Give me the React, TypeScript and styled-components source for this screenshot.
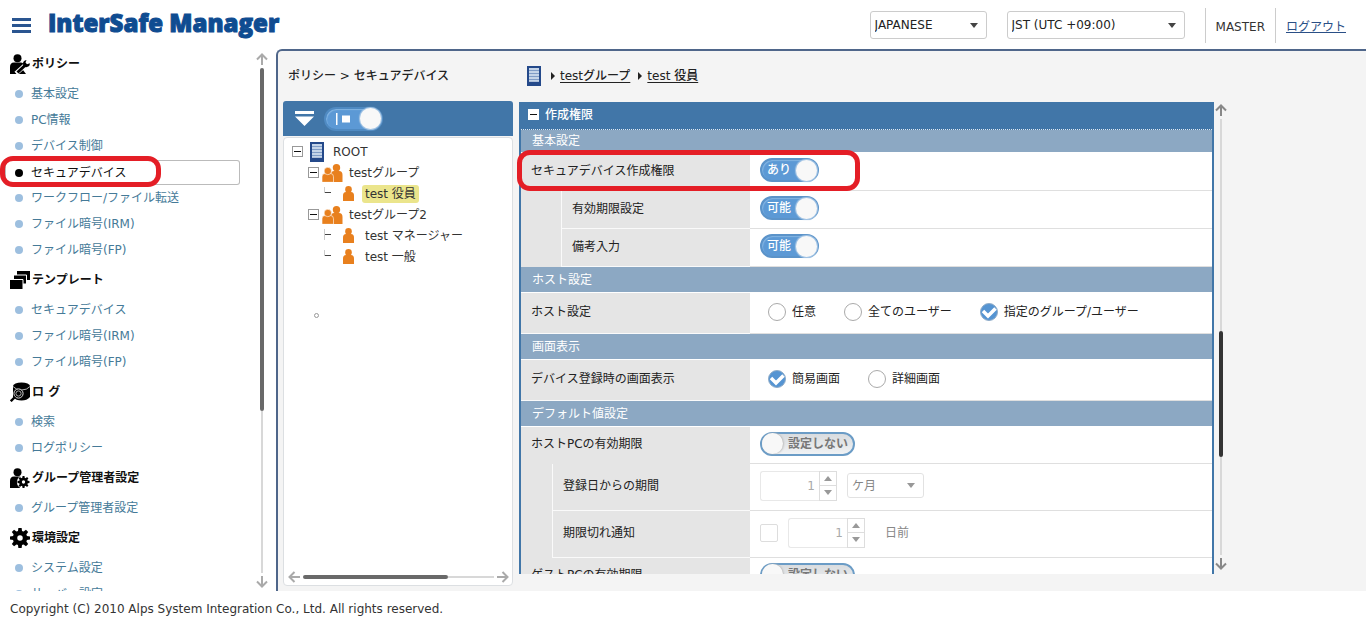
import React, { ReactNode, useId, useState } from 'react';
import styled, { createGlobalStyle, css } from 'styled-components';

const GlobalStyle = createGlobalStyle`
  *, *::before, *::after { box-sizing: border-box; }
  body {
    margin: 0;
    background: #fff;
    color: #333;
    font: 12px/18px "DejaVu Sans", "Noto Sans CJK JP", sans-serif;
  }
  button, input, select { font: inherit; color: inherit; }
  ul { list-style: none; margin: 0; padding: 0; }
`;

const Page = styled.div`
  display: flex;
  flex-direction: column;
  height: 100vh;
`;

/* ---------- header ---------- */

const Header = styled.header`
  display: flex;
  align-items: center;
  flex: none;
  height: 49px;
  padding: 1px 20px 0 12px;
`;

const MenuButton = styled.button`
  display: flex;
  flex-direction: column;
  gap: 3px;
  width: 19px;
  padding: 0;
  border: 0;
  background: none;
  span { height: 3px; background: #2a5590; }
`;

const Logo = styled.h1`
  margin: 0 auto 0 17px;
  padding-bottom: 4px;
  font: 800 24px/32px "Open Sans", sans-serif;
  color: #0f4c91;
  -webkit-text-stroke: 1px #0f4c91;
  white-space: nowrap;
`;

const SelectBox = styled.span<{ $width: number; $disabled?: boolean }>`
  display: inline-grid;
  align-items: center;
  width: ${p => p.$width}px;
  height: ${p => (p.$disabled ? 25 : 28)}px;
  border: 1px solid #ccc;
  border-radius: 3px;
  background: #fff;
  opacity: ${p => (p.$disabled ? 0.55 : 1)};
  select {
    grid-area: 1 / 1;
    appearance: none;
    width: 100%;
    height: 100%;
    padding: 0 20px 0 4px;
    border: 0;
    background: none;
    color: #222;
    opacity: 1;
  }
  svg {
    grid-area: 1 / 1;
    justify-self: end;
    margin-right: 8px;
    pointer-events: none;
  }
`;

const HeaderSelects = styled.div`
  display: flex;
  gap: 20px;
  margin-right: 20px;
`;

const UserCell = styled.div`
  display: flex;
  align-items: center;
  height: 35px;
  padding: 3px 10px 0;
  border-left: 1px solid #ccc;
  &:last-child { padding-right: 0; }
  a { color: #2a4f86; }
`;

/* ---------- body ---------- */

const Body = styled.div`
  display: flex;
  flex: 1;
  min-height: 0;
`;

const Sidebar = styled.nav`
  display: flex;
  flex: none;
  width: 276px;
`;

const Menu = styled.div`
  flex: 1;
  overflow: hidden;
  padding: 1px 0 0 5px;
`;

const MenuHeading = styled.h2`
  display: flex;
  align-items: center;
  gap: 2px;
  height: 34px;
  margin: 0;
  padding: 0 0 0 5px;
  font-size: 12px;
  font-weight: 700;
  color: #111;
  svg { flex: none; }
  &:first-child { height: 31px; padding-bottom: 3px; }
`;

const MenuItem = styled.li<{ $active?: boolean }>`
  display: flex;
  align-items: center;
  height: ${p => (p.$active ? 25 : 26)}px;
  width: 235px;
  padding-left: 10px;
  border-radius: 3px;
  ${p => p.$active && css`box-shadow: inset 0 0 0 1px #bbb;`}
  &::before {
    content: '';
    width: 8px;
    height: 8px;
    margin-right: 8px;
    border-radius: 50%;
    background: ${p => (p.$active ? '#000' : '#9dbfdf')};
  }
  a {
    color: ${p => (p.$active ? '#111' : '#457a98')};
    text-decoration: none;
    white-space: nowrap;
  }
`;

const ScrollBar = styled.div<{ $horizontal?: boolean; $color: string }>`
  display: flex;
  flex: none;
  align-items: center;
  flex-direction: ${p => (p.$horizontal ? 'row' : 'column')};
  gap: 3px;
  color: ${p => p.$color};
`;

const Track = styled.div<{ $horizontal?: boolean }>`
  display: flex;
  flex: 1;
  align-items: center;
  flex-direction: ${p => (p.$horizontal ? 'row' : 'column')};
`;

const Rail = styled.i<{ $grow: number; $horizontal?: boolean }>`
  flex: ${p => p.$grow} 1 0;
  ${p => (p.$horizontal ? 'height' : 'width')}: 2px;
  background: #d8d8d8;
`;

const Thumb = styled(Rail)<{ $tone: string }>`
  ${p => (p.$horizontal ? 'height' : 'width')}: 4px;
  border-radius: 2px;
  background: ${p => p.$tone};
`;

const Content = styled.main`
  display: flex;
  flex: 1;
  min-width: 0;
  padding: 0 139px 5px 5px;
  gap: 6px;
  border: solid #4f668a;
  border-width: 2px 0 0 2px;
  border-top-left-radius: 6px;
  background: #f4f4f4;
`;

const Column = styled.div<{ $width?: number }>`
  display: flex;
  flex-direction: column;
  min-width: 0;
  flex: ${p => (p.$width ? `0 0 ${p.$width}px` : '1')};
`;

const Crumbs = styled.div<{ $indent: number }>`
  display: flex;
  flex: none;
  align-items: center;
  height: 50px;
  padding-left: ${p => p.$indent}px;
  font-weight: 500;
  color: #222;
  white-space: nowrap;
  a { color: inherit; text-underline-offset: 2px; }
  > svg { margin-right: 2px; }
`;

const CrumbArrow = styled.i`
  margin: 0 5px 0 8px;
  border: solid transparent;
  border-width: 4px 0 4px 4px;
  border-left-color: #222;
`;

/* ---------- tree ---------- */

const TreeHeader = styled.div`
  display: flex;
  align-items: center;
  gap: 10px;
  flex: none;
  height: 35px;
  padding-left: 12px;
  border-radius: 3px 3px 0 0;
  background: #4176a8;
`;

const IconButton = styled.button`
  display: flex;
  padding: 0;
  border: 0;
  background: none;
`;

const TreeBody = styled.div`
  display: flex;
  flex-direction: column;
  flex: 1;
  min-height: 0;
  margin-top: 1px;
  padding: 3px 3px 2px 4px;
  border: 1px solid #dcdfe2;
  border-radius: 4px;
  background: #fff;
`;

const TreeList = styled.ul`
  flex: 1;
  overflow: hidden;
  color: #333;
`;

const TreeRow = styled.li<{ $level: number }>`
  display: flex;
  align-items: center;
  height: 21px;
  padding-left: ${p => 4 + p.$level * 16}px;
  white-space: nowrap;
`;

const Fold = styled.button`
  display: flex;
  align-items: center;
  justify-content: center;
  width: 11px;
  height: 11px;
  padding: 0;
  border: 1px solid #999;
  background: #fff;
  &::before { content: ''; width: 7px; height: 1px; background: #111; }
`;

const Branch = styled.i<{ $fork?: boolean }>`
  display: flex;
  align-items: ${p => (p.$fork ? 'center' : 'flex-end')};
  width: 7px;
  height: ${p => (p.$fork ? 11 : 6)}px;
  margin-bottom: ${p => (p.$fork ? 2 : 7)}px;
  border-left: 1px solid #ccc;
  &::before { content: ''; width: 6px; height: 1px; background: #444; }
`;

const TreeIcon = styled.span<{ $gap: number }>`
  display: flex;
  justify-content: center;
  width: 21px;
  margin-left: ${p => p.$gap}px;
`;

const NodeName = styled.span<{ $selected?: boolean }>`
  margin-left: 3px;
  padding: 0 3px;
  border-radius: 3px;
  background: ${p => (p.$selected ? '#ebe58c' : 'none')};
`;

const Dot = styled.i`
  display: block;
  width: 5px;
  height: 5px;
  margin: 46px 0 0 26px;
  border: 1px solid #999;
  border-radius: 50%;
`;

/* ---------- settings panel ---------- */

const PanelArea = styled.div`
  position: relative;
  display: flex;
  flex: 1;
  gap: 1px;
  min-height: 0;
  margin: 1px 0 12px;
`;

const Panel = styled.section`
  flex: 1;
  min-width: 0;
  overflow: hidden;
  border: solid #4176a8;
  border-width: 0 2px;
  background: #fff;
`;

const PanelTitle = styled.h2`
  display: flex;
  align-items: center;
  gap: 6px;
  height: 28px;
  margin: 0;
  padding: 0 0 2px 7px;
  border-bottom: 1px dotted #dfe8f0;
  background: #4176a8;
  color: #fff;
  font-size: 12px;
  font-weight: 500;
  ${Fold} { border-color: #fff; }
`;

const SectionTitle = styled.h3<{ $first?: boolean }>`
  display: flex;
  align-items: center;
  height: ${p => (p.$first ? 22 : 25)}px;
  margin: 0 0 1px;
  padding-left: 11px;
  background: #8ca8c3;
  color: #fff;
  font-size: 12px;
  font-weight: 400;
`;

const Row = styled.div<{ $height: number }>`
  display: grid;
  grid-template-columns: 229px 1fr;
  height: ${p => p.$height}px;
`;

const LabelCell = styled.div<{ $indent?: number; $open?: boolean }>`
  display: flex;
  padding-left: ${p => p.$indent ?? 0}px;
  background: #e5e5e5;
  color: #222;
  > * {
    display: flex;
    flex: 1;
    align-items: center;
    padding: 0 0 ${p => (p.$open ? 3 : 2)}px 10px;
    border-bottom: ${p => (p.$open ? 0 : 1)}px solid #fafafa;
    ${p => p.$indent && css`border-left: 1px solid #fafafa;`}
  }
`;

const ValueCell = styled.div`
  display: flex;
  align-items: center;
  padding: 0 0 3px 10px;
  border-bottom: 1px solid #dfdfdf;
  color: #222;
  white-space: nowrap;
`;

const Switch = styled.button<{ $on: boolean }>`
  display: flex;
  align-items: center;
  justify-content: space-between;
  flex-direction: ${p => (p.$on ? 'row' : 'row-reverse')};
  height: 24px;
  padding: ${p => (p.$on ? '0 0 0 5px' : '0 5px 0 0')};
  border: 2px solid ${p => (p.$on ? '#5b93c9' : '#6b9cc6')};
  border-radius: 12px;
  background: ${p => (p.$on ? '#5c99d5' : 'linear-gradient(#d9dcdf, #f0f2f4)')};
  box-shadow: ${p => (p.$on ? 'inset 1px 1px 1px #82b4e2' : 'none')};
  color: ${p => (p.$on ? '#fff' : '#777')};
  font-weight: ${p => (p.$on ? 500 : 700)};
  gap: 5px;
  line-height: 20px;
  white-space: nowrap;
  &::after {
    content: '';
    width: 21px;
    height: 21px;
    border-radius: 50%;
    background: #f8f8f8;
    box-shadow: ${p => (p.$on ? '0 0 1px 1px #a9c8e6' : '1px 0 2px #bbb')};
  }
`;

const TreeSwitch = styled(Switch)`
  width: 59px;
  padding-left: 10px;
  border-color: #4f8ac2;
`;

const ChoiceLabel = styled.label<{ $gap: number }>`
  display: inline-grid;
  grid-template-columns: 18px auto;
  align-items: center;
  column-gap: 6px;
  margin-right: ${p => p.$gap}px;
  input, svg { grid-area: 1 / 1; margin: 0; }
  svg { pointer-events: none; visibility: hidden; }
  input {
    appearance: none;
    width: 18px;
    height: 18px;
    border: 1px solid #aaa;
    border-radius: 50%;
    background: #fff;
  }
  input:checked { border-color: #8facc8; background: #5594d2; }
  input:checked + svg { visibility: visible; }
`;

const ChoiceGroup = styled.div`
  display: flex;
  padding-left: 8px;
`;

const Tick = styled.input`
  appearance: none;
  width: 18px;
  height: 18px;
  margin: 0 10px 0 0;
  border: 1px solid #ddd;
  border-radius: 2px;
  background: #fff;
`;

const Stepper = styled.span`
  display: grid;
  grid-template-columns: 59px 18px;
  grid-template-rows: 15px 15px;
  margin-right: 10px;
  color: #aaa;
  input {
    grid-row: 1 / 3;
    width: 100%;
    padding: 0 4px 0 0;
    border: 1px solid #e8e8e8;
    border-right: 0;
    border-radius: 3px 0 0 3px;
    background: #fff;
    text-align: right;
  }
  button {
    display: grid;
    place-items: center;
    padding: 0;
    border: 1px solid #ddd;
    background: #fff;
  }
  button + button { border-top: 0; }
`;

const Muted = styled.span`
  margin-left: 10px;
  color: #888;
`;

/* ---------- annotation marks and footer ---------- */

const Marked = styled.div`
  position: relative;
  padding-top: 1px;
`;

const Highlight = styled.i`
  position: absolute;
  z-index: 2;
  border: 5px solid #e41e26;
  border-radius: 13px;
  pointer-events: none;
`;

const MenuHighlight = styled(Highlight)`
  top: -3px;
  bottom: -2px;
  left: -5px;
  width: 161px;
`;

const PanelHighlight = styled(Highlight)`
  top: 48px;
  left: -2px;
  width: 343px;
  height: 41px;
`;

const Footer = styled.footer`
  flex: none;
  height: 30px;
  padding: 9px 10px 0;
`;

/* ---------- drawings ---------- */

const Caret = ({ color = '#444' }: { color?: string }) => (
  <svg width="8" height="5" viewBox="0 0 8 5"><path d="M0 0h8L4 5z" fill={color} /></svg>
);

const Arrow = ({ turn }: { turn: number }) => (
  <svg width="12" height="12" viewBox="0 0 12 12" transform={`rotate(${turn})`}>
    <path d="M6 12V1.500M1 6.500l5-5 5 5" fill="none" stroke="currentColor" strokeWidth="2" />
  </svg>
);

const DocIcon = () => (
  <svg width="14" height="20" viewBox="0 0 14 20">
    <path d="M0 0h14v20H0z" fill="#24498a" />
    <path d="M2 2h10v13H2z" fill="#7f9cc6" />
    <path d="M2 3h10M2 6h10M2 9h10M2 12h10M2 15h10" stroke="#dbe6f4" strokeWidth="1.4" />
  </svg>
);

const UserIcon = () => (
  <svg width="11" height="15" viewBox="0 0 11 15" fill="#e8801e">
    <circle cx="5.5" cy="3.4" r="3.3" />
    <path d="M0 15V9.500Q0 6 3 6h5q3 0 3 3.500V15z" />
  </svg>
);

const GroupIcon = () => (
  <svg width="21" height="18" viewBox="0 0 21 18" fill="#e8801e">
    <circle cx="14.500" cy="3.700" r="3.700" />
    <path d="M9 18V11Q9 7 12 7h5q3.500 0 3.500 4v7z" />
    <g stroke="#fff" strokeWidth=".6">
      <path d="M0 18.300v-5.500Q0 9.500 3 9.500h5.500q3 0 3 3.300v5.500z" />
      <circle cx="5.800" cy="7" r="3.700" />
    </g>
  </svg>
);

const FilterIcon = () => (
  <svg width="19" height="15" viewBox="0 0 19 15" fill="#fff">
    <path d="M0 0h19v3H0zM0 5.500h19L9.500 15z" />
  </svg>
);

const CheckMark = () => (
  <svg width="18" height="18" viewBox="0 0 18 18">
    <path d="M3 8l5 5L15.500 5.500" fill="none" stroke="#fff" strokeWidth="3.500" />
  </svg>
);

const gearTeeth = [0, 45, 90, 135, 180, 225, 270, 315];

const Gear = ({ x, y, r, halo }: { x: number; y: number; r: number; halo?: boolean }) => (
  <g transform={`translate(${x} ${y}) scale(${r / 10})`}>
    {halo && <circle r="11" fill="#fff" />}
    {gearTeeth.map(a => <path key={a} d="M-2.300 -5L-1.600 -10h3.200L2.300 -5z" transform={`rotate(${a})`} />)}
    <circle r="5" fill="none" stroke="currentColor" strokeWidth="4.500" />
  </g>
);

const MenuIcon = ({ name }: { name: string }) => (
  <svg width="20" height="20" viewBox="0 0 20 20" fill="#000" color="#000">
    {(name === 'policy' || name === 'admin') && (
      <>
        <circle cx="7.500" cy="4.200" r="4" />
        <path d="M0 20v-7Q0 8.500 4 8.500h6.500q3.500 0 4 3.500L10 20z" />
      </>
    )}
    {name === 'policy' && (
      <>
        <path d="M10 12l6 8h-7z" />
        <path d="M6 19.500L16 10.500" stroke="#fff" strokeWidth="4.400" />
        <path d="M7.500 18.500L15.500 11" stroke="#000" strokeWidth="3" />
        <path d="M13 9.500q0-3 3.500-3.500l-1 2.500 1.500 1.800 2.800-1q.3 3.200-2.800 3.800-4 .5-4-3.600z" />
      </>
    )}
    {name === 'admin' && <Gear x={13.5} y={14} r={6} halo />}
    {name === 'gear' && <Gear x={10} y={10} r={10} />}
    {name === 'template' && (
      <>
        <path d="M7 1h13v9H7z" />
        <path d="M3.500 5h13v9h-13z" stroke="#fff" />
        <path d="M-.5 9.500h13.500v10H-.5z" stroke="#fff" />
      </>
    )}
    {name === 'log' && (
      <>
        <path d="M3 4v11q3 3.500 8.500 3.500T20 15V4z" />
        <ellipse cx="11.500" cy="4" rx="8.500" ry="3.500" />
        <path d="M3 4.500q3 3.500 8.500 3.500T20 4.500" fill="none" stroke="#ddd" strokeWidth=".8" />
        <circle cx="8.500" cy="11.500" r="4.600" stroke="#ddd" />
        <circle cx="8.500" cy="11.500" r="2.600" fill="none" stroke="#aaa" />
        <path d="M5 15L.8 19.200" stroke="#000" strokeWidth="2.400" />
      </>
    )}
  </svg>
);

/* ---------- composed parts ---------- */

type BarProps = { horizontal?: boolean; color: string; tone: string; parts: [number, number, number] };

const Scroll = ({ horizontal, color, tone, parts }: BarProps) => (
  <ScrollBar $horizontal={horizontal} $color={color} aria-hidden="true">
    <Arrow turn={horizontal ? -90 : 0} />
    <Track $horizontal={horizontal}>
      <Rail $grow={parts[0]} $horizontal={horizontal} />
      <Thumb $grow={parts[1]} $horizontal={horizontal} $tone={tone} />
      <Rail $grow={parts[2]} $horizontal={horizontal} />
    </Track>
    <Arrow turn={horizontal ? 90 : 180} />
  </ScrollBar>
);

const SideScroll = styled.div`
  display: flex;
  padding: 4px 8px 3px 0;
`;

const PanelScroll = styled.div`
  display: flex;
  padding: 2px 0 4px;
`;

const Toggle = ({ on, off, initial, label }: { on: string; off: string; initial: boolean; label: string }) => {
  const [value, setValue] = useState(initial);
  return (
    <Switch type="button" role="switch" aria-checked={value} aria-label={label} $on={value} onClick={() => setValue(!value)}>
      {value ? on : off}
    </Switch>
  );
};

const Choices = ({ options, initial, gaps }: { options: string[]; initial: number; gaps: number[] }) => {
  const name = useId();
  return (
    <ChoiceGroup>
      {options.map((o, i) => (
        <ChoiceLabel key={o} $gap={gaps[i] ?? 0}>
          <input type="radio" name={name} defaultChecked={i === initial} />
          <CheckMark />
          {o}
        </ChoiceLabel>
      ))}
    </ChoiceGroup>
  );
};

const NumberStepper = ({ label }: { label: string }) => (
  <Stepper>
    <input type="text" inputMode="numeric" defaultValue="1" aria-label={label} disabled />
    <button type="button" aria-label="増やす" disabled>
      <svg width="8" height="5" viewBox="0 0 8 5"><path d="M0 5h8L4 0z" fill="#999" /></svg>
    </button>
    <button type="button" aria-label="減らす" disabled><Caret color="#999" /></button>
  </Stepper>
);

type SettingProps = { label: string; height: number; indent?: number; open?: boolean; children: ReactNode };

const Setting = ({ label, height, indent, open, children }: SettingProps) => (
  <Row $height={height}>
    <LabelCell $indent={indent} $open={open}><span>{label}</span></LabelCell>
    <ValueCell>{children}</ValueCell>
  </Row>
);

type NodeProps = { level: number; icon: ReactNode; name: string; selected?: boolean; fork?: boolean };

const TreeNode = ({ level, icon, name, selected, fork }: NodeProps) => (
  <TreeRow $level={level}>
    {level < 2 ? <Fold type="button" aria-label="折りたたむ" /> : <Branch $fork={fork} />}
    <TreeIcon $gap={level < 2 ? 3 : 7}>{icon}</TreeIcon>
    <NodeName $selected={selected}>{name}</NodeName>
  </TreeRow>
);

const menu = [
  { icon: 'policy', title: 'ポリシー', items: ['基本設定', 'PC情報', 'デバイス制御', 'セキュアデバイス', 'ワークフロー/ファイル転送', 'ファイル暗号(IRM)', 'ファイル暗号(FP)'] },
  { icon: 'template', title: 'テンプレート', items: ['セキュアデバイス', 'ファイル暗号(IRM)', 'ファイル暗号(FP)'] },
  { icon: 'log', title: 'ロ グ', items: ['検索', 'ログポリシー'] },
  { icon: 'admin', title: 'グループ管理者設定', items: ['グループ管理者設定'] },
  { icon: 'gear', title: '環境設定', items: ['システム設定', 'サーバー設定'] },
];

export default function App() {
  return (
    <Page>
      <GlobalStyle />
      <Header>
        <MenuButton type="button" aria-label="メニュー"><span /><span /><span /></MenuButton>
        <Logo>InterSafe Manager</Logo>
        <HeaderSelects>
          <SelectBox $width={117}>
            <select aria-label="言語"><option>JAPANESE</option></select>
            <Caret />
          </SelectBox>
          <SelectBox $width={178}>
            <select aria-label="タイムゾーン"><option>JST (UTC +09:00)</option></select>
            <Caret />
          </SelectBox>
        </HeaderSelects>
        <UserCell>MASTER</UserCell>
        <UserCell><a href="#logout">ログアウト</a></UserCell>
      </Header>

      <Body>
        <Sidebar>
          <Menu>
            {menu.map((group, g) => (
              <React.Fragment key={group.title}>
                <MenuHeading><MenuIcon name={group.icon} />{group.title}</MenuHeading>
                <ul>
                  {group.items.map((item, i) =>
                    g === 0 && i === 3 ? (
                      <li key={item}>
                        <Marked>
                          <MenuItem as="div" $active><a href="#menu" aria-current="page">{item}</a></MenuItem>
                          <MenuHighlight />
                        </Marked>
                      </li>
                    ) : (
                      <MenuItem key={item}><a href="#menu">{item}</a></MenuItem>
                    ),
                  )}
                </ul>
              </React.Fragment>
            ))}
          </Menu>
          <SideScroll><Scroll color="#aaa" tone="#696969" parts={[0, 341, 161]} /></SideScroll>
        </Sidebar>

        <Content>
          <Column $width={230}>
            <Crumbs $indent={5}>ポリシー &gt; セキュアデバイス</Crumbs>
            <TreeHeader>
              <IconButton type="button" aria-label="すべて展開"><FilterIcon /></IconButton>
              <TreeSwitch type="button" role="switch" aria-checked="true" aria-label="表示切替" $on>
                <svg width="14" height="12" viewBox="0 0 14 12" fill="#fff"><path d="M0 0h1.500v12H0zM6 2.500h8v7H6z" /></svg>
              </TreeSwitch>
            </TreeHeader>
            <TreeBody>
              <TreeList>
                <TreeNode level={0} icon={<DocIcon />} name="ROOT" />
                <TreeNode level={1} icon={<GroupIcon />} name="testグループ" />
                <TreeNode level={2} icon={<UserIcon />} name="test 役員" selected />
                <TreeNode level={1} icon={<GroupIcon />} name="testグループ2" />
                <TreeNode level={2} icon={<UserIcon />} name="test マネージャー" fork />
                <TreeNode level={2} icon={<UserIcon />} name="test 一般" />
                <li><Dot /></li>
              </TreeList>
              <Scroll horizontal color="#aaa" tone="#696969" parts={[0, 143, 46]} />
            </TreeBody>
          </Column>

          <Column>
            <Crumbs $indent={8}>
              <DocIcon />
              <CrumbArrow /><a href="#group">testグループ</a>
              <CrumbArrow /><a href="#node">test 役員</a>
            </Crumbs>
            <PanelArea>
              <Panel>
                <PanelTitle><Fold type="button" aria-label="折りたたむ" />作成権限</PanelTitle>
                <SectionTitle $first>基本設定</SectionTitle>
                <Setting label="セキュアデバイス作成権限" height={38} open><Toggle on="あり" off="なし" initial label="セキュアデバイス作成権限" /></Setting>
                <Setting label="有効期限設定" height={38} indent={40}><Toggle on="可能" off="不可" initial label="有効期限設定" /></Setting>
                <Setting label="備考入力" height={38} indent={40}><Toggle on="可能" off="不可" initial label="備考入力" /></Setting>
                <SectionTitle>ホスト設定</SectionTitle>
                <Setting label="ホスト設定" height={41}><Choices options={['任意', '全てのユーザー', '指定のグループ/ユーザー']} initial={2} gaps={[28, 28]} /></Setting>
                <SectionTitle>画面表示</SectionTitle>
                <Setting label="デバイス登録時の画面表示" height={41}><Choices options={['簡易画面', '詳細画面']} initial={0} gaps={[28]} /></Setting>
                <SectionTitle>デフォルト値設定</SectionTitle>
                <Setting label="ホストPCの有効期限" height={37} open><Toggle on="設定する" off="設定しない" initial={false} label="ホストPCの有効期限" /></Setting>
                <Setting label="登録日からの期間" height={47} indent={31}>
                  <NumberStepper label="登録日からの期間" />
                  <SelectBox $width={77} $disabled>
                    <select aria-label="単位" disabled><option>ケ月</option></select>
                    <Caret />
                  </SelectBox>
                </Setting>
                <Setting label="期限切れ通知" height={47} indent={31}>
                  <Tick type="checkbox" aria-label="期限切れ通知" disabled />
                  <NumberStepper label="通知日数" />
                  <Muted>日前</Muted>
                </Setting>
                <Setting label="ゲストPCの有効期限" height={37} open><Toggle on="設定する" off="設定しない" initial={false} label="ゲストPCの有効期限" /></Setting>
              </Panel>
              <PanelScroll><Scroll color="#888" tone="#333" parts={[211, 125, 98]} /></PanelScroll>
              <PanelHighlight />
            </PanelArea>
          </Column>
        </Content>
      </Body>
      <Footer>Copyright (C) 2010 Alps System Integration Co., Ltd. All rights reserved.</Footer>
    </Page>
  );
}
